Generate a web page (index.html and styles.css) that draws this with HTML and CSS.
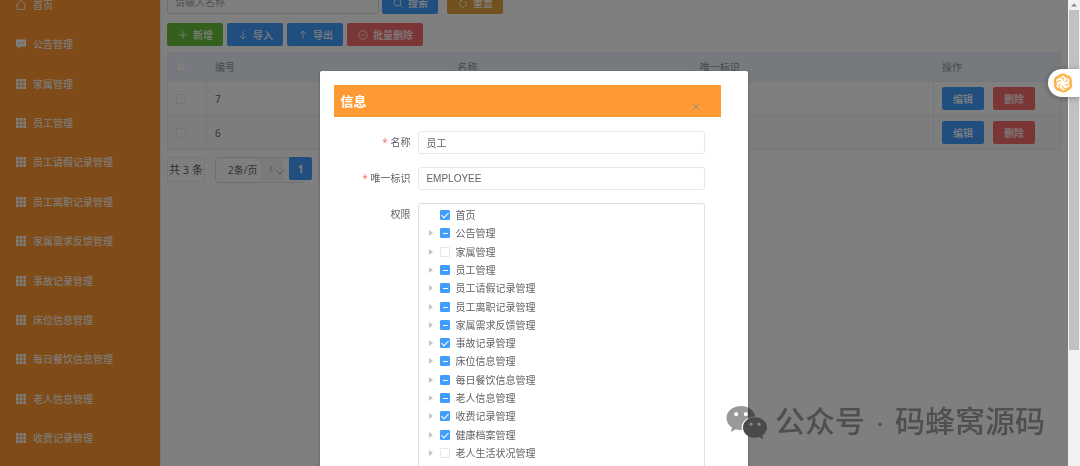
FILE: index.html
```html
<!DOCTYPE html>
<html lang="zh-CN">
<head>
<meta charset="utf-8">
<title>角色管理</title>
<link rel="stylesheet" href="styles.css">
</head>
<body>
<svg class="defs" aria-hidden="true">
  <symbol id="grid" viewBox="0 0 10 10"><path fill="currentColor" d="M0 0h2.7v2.7H0zM3.6 0h2.8v2.7H3.6zM7.3 0H10v2.7H7.3zM0 3.6h2.7v2.8H0zM3.6 3.6h2.8v2.8H3.6zM7.3 3.6H10v2.8H7.3zM0 7.3h2.7V10H0zM3.6 7.3h2.8V10H3.6zM7.3 7.3H10V10H7.3z"/></symbol>
</svg>
<div class="app">
  <nav class="sidebar">
    <div class="menu">
      <a class="item" href="#"><svg class="icon" viewBox="0 0 10 10"><path d="M.3 5 5 .5 9.700 5M1.300 4v5.500h2.200M8.700 4v5.500H3.500" fill="none" stroke="currentColor" stroke-width=".8"/></svg>首页</a>
      <a class="item" href="#"><svg class="icon" viewBox="0 0 10 10"><path fill="currentColor" fill-rule="evenodd" d="M0 .6h10v7H4.500L2 9.800V7.600H0zM2 3.500v1.200h1.200V3.500zM4.400 3.500v1.200h1.200V3.500zM6.800 3.500v1.200H8V3.500z"/></svg>公告管理</a>
      <a class="item" href="#"><svg class="icon"><use href="#grid"/></svg>家属管理</a>
      <a class="item" href="#"><svg class="icon"><use href="#grid"/></svg>员工管理</a>
      <a class="item" href="#"><svg class="icon"><use href="#grid"/></svg>员工请假记录管理</a>
      <a class="item" href="#"><svg class="icon"><use href="#grid"/></svg>员工离职记录管理</a>
      <a class="item" href="#"><svg class="icon"><use href="#grid"/></svg>家属需求反馈管理</a>
      <a class="item" href="#"><svg class="icon"><use href="#grid"/></svg>事故记录管理</a>
      <a class="item" href="#"><svg class="icon"><use href="#grid"/></svg>床位信息管理</a>
      <a class="item" href="#"><svg class="icon"><use href="#grid"/></svg>每日餐饮信息管理</a>
      <a class="item" href="#"><svg class="icon"><use href="#grid"/></svg>老人信息管理</a>
      <a class="item" href="#"><svg class="icon"><use href="#grid"/></svg>收费记录管理</a>
    </div>
  </nav>

  <main class="main">
    <form class="search">
      <input class="field" type="text" placeholder="请输入名称" aria-label="名称">
      <button class="btn blue" type="button"><svg class="icon" viewBox="0 0 10 10"><path d="M8 4.500a3.500 3.500 0 1 1-7 0 3.500 3.500 0 0 1 7 0M7 7l2.300 2.300" fill="none" stroke="currentColor" stroke-width=".8"/></svg>搜索</button>
      <button class="btn amber" type="button"><svg class="icon" viewBox="0 0 10 10"><path d="M2.600 3.200a3.400 3.400 0 1 0 4.800 0M4.600 3H2.500V.9" fill="none" stroke="currentColor" stroke-width=".8"/></svg>重置</button>
    </form>
    <div class="tools">
      <button class="btn green" type="button"><svg class="icon" viewBox="0 0 10 10"><path d="M5 1v8M1 5h8" fill="none" stroke="currentColor" stroke-width=".8"/></svg>新增</button>
      <button class="btn blue" type="button"><svg class="icon" viewBox="0 0 10 10"><path d="M5 1v8M2 6l3 3 3-3" fill="none" stroke="currentColor" stroke-width=".8"/></svg>导入</button>
      <button class="btn blue" type="button"><svg class="icon" viewBox="0 0 10 10"><path d="M5 9V1M2 4l3-3 3 3" fill="none" stroke="currentColor" stroke-width=".8"/></svg>导出</button>
      <button class="btn red" type="button"><svg class="icon" viewBox="0 0 10 10"><path d="M9.200 5A4.200 4.200 0 1 1 .8 5a4.200 4.200 0 0 1 8.400 0M3 5h4" fill="none" stroke="currentColor" stroke-width=".8"/></svg>批量删除</button>
    </div>
    <table class="table">
      <colgroup><col class="c-check"><col class="c-id"><col class="c-name"><col class="c-key"><col class="c-ops"></colgroup>
      <thead>
        <tr><th><input class="check" type="checkbox" aria-label="全选"></th><th>编号</th><th>名称</th><th>唯一标识</th><th>操作</th></tr>
      </thead>
      <tbody>
        <tr><td><input class="check" type="checkbox" aria-label="选择 7"></td><td>7</td><td></td><td></td><td><div class="ops"><button class="btn small blue" type="button">编辑</button><button class="btn small red" type="button">删除</button></div></td></tr>
        <tr><td><input class="check" type="checkbox" aria-label="选择 6"></td><td>6</td><td></td><td></td><td><div class="ops"><button class="btn small blue" type="button">编辑</button><button class="btn small red" type="button">删除</button></div></td></tr>
      </tbody>
    </table>
    <div class="pager">
      <span class="total">共 3 条</span>
      <div class="size">
        <select class="size-select" aria-label="每页条数"><option>2条/页</option></select>
        <button class="prev" type="button" aria-label="上一页"><svg class="icon" viewBox="0 0 10 10"><path d="M5.500 2 3 5l2.500 3" fill="none" stroke="currentColor" stroke-width=".8"/></svg></button>
        <svg class="icon caret" viewBox="0 0 10 10"><path d="M1.500 3.500 5 7l3.500-3.500" fill="none" stroke="currentColor" stroke-width=".8"/></svg>
      </div>
      <button class="page on" type="button">1</button>
      <button class="page" type="button">2</button>
    </div>
  </main>

  <div class="scrollbar"><svg class="arrow" viewBox="0 0 10 10"><path d="M2 6.500l3-3 3 3z" fill="#808080"/></svg><div class="thumb"></div></div>
</div>

<div class="overlay">
  <section class="dialog" role="dialog" aria-label="信息">
    <header class="dialog-head">
      <h2 class="title">信息</h2>
      <button class="close" type="button" aria-label="关闭"><svg class="icon" viewBox="0 0 10 10"><path d="M1.500 1.500l7 7M8.500 1.500l-7 7" fill="none" stroke="currentColor"/></svg></button>
    </header>
    <form class="form">
      <label class="label required" for="name">名称</label>
      <input class="field" id="name" type="text" value="员工">
      <label class="label required" for="key">唯一标识</label>
      <input class="field" id="key" type="text" value="EMPLOYEE">
      <span class="label">权限</span>
      <div class="tree-box">
        <ul class="tree">
          <li class="node leaf"><label class="pick"><input class="check" type="checkbox" checked>首页</label></li>
          <li class="node"><label class="pick"><input class="check partial" type="checkbox">公告管理</label></li>
          <li class="node"><label class="pick"><input class="check" type="checkbox">家属管理</label></li>
          <li class="node"><label class="pick"><input class="check partial" type="checkbox">员工管理</label></li>
          <li class="node"><label class="pick"><input class="check partial" type="checkbox">员工请假记录管理</label></li>
          <li class="node"><label class="pick"><input class="check partial" type="checkbox">员工离职记录管理</label></li>
          <li class="node"><label class="pick"><input class="check partial" type="checkbox">家属需求反馈管理</label></li>
          <li class="node"><label class="pick"><input class="check" type="checkbox" checked>事故记录管理</label></li>
          <li class="node"><label class="pick"><input class="check partial" type="checkbox">床位信息管理</label></li>
          <li class="node"><label class="pick"><input class="check partial" type="checkbox">每日餐饮信息管理</label></li>
          <li class="node"><label class="pick"><input class="check partial" type="checkbox">老人信息管理</label></li>
          <li class="node"><label class="pick"><input class="check" type="checkbox" checked>收费记录管理</label></li>
          <li class="node"><label class="pick"><input class="check" type="checkbox" checked>健康档案管理</label></li>
          <li class="node"><label class="pick"><input class="check" type="checkbox">老人生活状况管理</label></li>
        </ul>
      </div>
    </form>
  </section>
</div>

<button class="assistant" type="button" aria-label="助手">
  <svg class="flower" viewBox="-10 -10 20 20">
    <g fill="none" stroke="#fbb040" stroke-width="2.200" stroke-linecap="round">
      <path id="petal" d="M-4.500-5.500C-3.500-9 1.500-9.500 3.500-6.500"/>
      <use href="#petal" transform="rotate(60)"/><use href="#petal" transform="rotate(120)"/><use href="#petal" transform="rotate(180)"/><use href="#petal" transform="rotate(240)"/><use href="#petal" transform="rotate(300)"/>
    </g>
    <g fill="none" stroke="#fcc56f" stroke-width="1.300" stroke-linecap="round">
      <path id="swirl" d="M-4-5.500C-1.500-6.500 0-5 .5-3"/>
      <use href="#swirl" transform="rotate(60)"/><use href="#swirl" transform="rotate(120)"/><use href="#swirl" transform="rotate(180)"/><use href="#swirl" transform="rotate(240)"/><use href="#swirl" transform="rotate(300)"/>
    </g>
  </svg>
</button>

<div class="watermark">
  <svg class="wechat" viewBox="0 0 42 34">
    <path fill="#000" fill-opacity=".4" fill-rule="evenodd" d="M15 1C6.800 1 .5 6.300.5 13c0 4 2.200 7.300 5.500 9.500L4.800 27l5-2.700c2 .6 4 .9 6.200.7-1.800-7 4-13.700 13.300-13.600C28 5.500 22.300 1 15 1zM10.200 7.200a1.900 1.900 0 1 1 0 3.800 1.900 1.900 0 0 1 0-3.800zm9.600 0a1.900 1.900 0 1 1 0 3.800 1.900 1.900 0 0 1 0-3.800z"/>
    <path fill="#fff" d="M10.200 7.200a1.900 1.900 0 1 1 0 3.800 1.900 1.900 0 0 1 0-3.800zm9.600 0a1.900 1.900 0 1 1 0 3.800 1.900 1.900 0 0 1 0-3.800z"/>
    <path fill="#4a4a4a" d="M29 12.300c-7 0-12 4.600-12 10.200s5 10.200 12 10.200c1.500 0 2.900-.2 4.200-.6l4 2-.9-3.600c2.900-1.900 4.700-4.700 4.700-8 0-5.600-5-10.200-12-10.200z"/>
    <circle cx="25" cy="19.200" r="1.600" fill="#888"/><circle cx="33" cy="19.200" r="1.600" fill="#888"/>
  </svg>
  <span>公众号</span><span class="dot">·</span><span>码蜂窝源码</span>
</div>
</body>
</html>
```
FILE: styles.css
```css
* { box-sizing: border-box; }

body {
  margin: 0;
  height: 100vh;
  overflow: hidden;
  background: #fff;
  color: #606266;
  font: 10px/16px "Open Sans", "Noto Sans CJK SC", sans-serif;
}

button, input, select { font: inherit; color: inherit; margin: 0; }
button { border: 0; padding: 0; }

.defs { display: none; }
.icon { width: 10px; height: 10px; flex: none; }

.app { display: flex; height: 100vh; overflow: hidden; }

/* Sidebar */
.sidebar { flex: none; width: 160px; background: #ff9933; }
.menu {
  display: grid;
  grid-auto-rows: 1fr;
  height: 473px;
  margin-top: -15px;
}
.item {
  display: flex;
  align-items: center;
  gap: 7px;
  padding-left: 16px;
  color: #fff;
  text-decoration: none;
}

/* Content */
.main {
  flex: 1;
  min-width: 0;
  margin-top: -9px;
  padding: 0 7px 0 6px;
  border-left: 1px solid #eee;
}
.search { display: flex; gap: 9px; }
.search .field { width: 212px; margin-right: -6px; }
.tools { display: flex; gap: 4px; margin: 9px 0 6px; }

.field {
  width: 100%;
  height: 23px;
  padding: 0 7px;
  border: 1px solid #dcdfe6;
  border-radius: 3px;
  background: #fff;
  font-family: "Liberation Sans", "Noto Sans CJK SC", sans-serif;
}
.field::placeholder { color: #a0a4ac; opacity: 1; }

.btn {
  display: flex;
  align-items: center;
  justify-content: center;
  gap: 5px;
  height: 23px;
  padding: 0 10px 0 11px;
  border-radius: 2px;
  color: #fff;
  font-weight: 500;
}
.small { padding: 0 11px; }
.blue { background: #409eff; }
.green { background: #67c23a; }
.amber { background: #e6a23c; }
.red { background: #f56c6c; }

.table {
  width: 100%;
  table-layout: fixed;
  border-collapse: collapse;
  border: 1px solid #ebeef5;
}
.c-check { width: 39px; }
.c-ops { width: 127px; }
.table th, .table td {
  padding: 0 8px;
  border: 1px solid #ebeef5;
  text-align: left;
  font-weight: 400;
}
.table th { height: 29px; background: #ecf5fc; color: #909399; }
.table td { height: 34px; }
.table tbody tr:nth-child(2) { background: #fafafa; }
.table .check { border-color: #e8eaef; }
.ops { display: flex; gap: 9px; }

.check {
  appearance: none;
  display: block;
  position: relative;
  flex: none;
  width: 10px;
  height: 10px;
  border: 1px solid #dcdfe6;
  border-radius: 1px;
  background: #fff;
}
.check:checked, .check.partial { border-color: #409eff; background: #409eff; }
.check:checked::after {
  content: "";
  position: absolute;
  left: 2px;
  top: 0;
  width: 3px;
  height: 6px;
  border: solid #fff;
  border-width: 0 1px 1px 0;
  transform: rotate(45deg);
}
.check.partial::after {
  content: "";
  position: absolute;
  left: 2px;
  top: 4px;
  width: 5px;
  height: 1px;
  background: #fff;
}

.pager { display: flex; align-items: flex-start; gap: 6px; margin-top: 7px; }
.total {
  height: 25px;
  margin-right: 4px;
  border: 1px solid #ebeef5;
  padding: 0 1px;
  font-size: 11px;
  line-height: 23px;
}
.size { position: relative; width: 68px; }
.size-select {
  appearance: none;
  width: 90px;
  height: 26px;
  padding: 0 12px;
  border: 1px solid #dcdfe6;
  border-radius: 3px;
  background: #fff;
}
.prev {
  position: absolute;
  right: 0;
  top: 1px;
  width: 23px;
  height: 23px;
  background: #f4f4f5;
  color: #909399;
}
.caret { position: absolute; right: -2px; top: 10px; color: #909399; }
.page {
  position: relative;
  width: 23px;
  height: 23px;
  border-radius: 2px;
  background: #f4f4f5;
  font-weight: 700;
}
.page.on { background: #409eff; color: #fff; }

.scrollbar { flex: none; width: 12px; padding: 0 1px; background: #f1f1f1; }
.arrow { display: block; width: 10px; height: 10px; }
.thumb { height: 73vh; background: #c1c1c1; }

/* Dialog */
.overlay {
  position: fixed;
  inset: 0 12px 0 0;
  overflow: hidden;
  padding-top: 71px;
  background: rgba(0, 0, 0, .5);
}
.dialog {
  width: 40%;
  min-height: 100%;
  margin: 0 auto;
  padding: 14px;
  border-radius: 2px;
  background: #fff;
  box-shadow: 0 1px 3px rgba(0, 0, 0, .3);
}
.dialog-head {
  display: flex;
  align-items: center;
  justify-content: space-between;
  height: 32px;
  margin-right: 13px;
  padding: 0 20px 0 6px;
  background: #ff9933;
}
.title { margin: 0; color: #fff; font-size: 13px; line-height: 20px; }
.close {
  align-self: flex-end;
  width: 10px;
  height: 16px;
  background: none;
  color: #909399;
}
.close .icon { display: block; margin-bottom: 4px; }
.form {
  display: grid;
  grid-template-columns: 76px 1fr;
  gap: 13px 8px;
  padding: 14px 29px 0 0;
}
.label { line-height: 23px; text-align: right; }
.required::before { content: "* "; color: #f56c6c; }
.form .field { border-color: #e4e7ed; }

.tree-box {
  padding: 2px 11px 24px 10px;
  border: 1px solid #dcdfe6;
  border-radius: 3px;
}
.tree {
  display: grid;
  grid-auto-rows: 1fr;
  height: 256px;
  margin: 0;
  padding: 0;
  list-style: none;
}
.node { display: flex; align-items: center; gap: 7px; }
.node::before {
  content: "";
  border: solid transparent;
  border-width: 3px 0 3px 4px;
  border-left-color: #c0c4cc;
}
.node .check:not(:checked, .partial) { border-color: #e4e7ed; }
.leaf::before { border-left-color: transparent; }
.pick { display: flex; align-items: center; gap: 5px; }

/* Floating items */
.assistant {
  position: fixed;
  right: 0;
  top: 69px;
  display: flex;
  align-items: center;
  width: 32px;
  height: 28px;
  padding-left: 5px;
  border-radius: 14px 0 0 14px;
  background: #fff;
  box-shadow: 0 1px 6px rgba(0, 0, 0, .3);
}
.flower { width: 20px; height: 20px; }

.watermark {
  position: fixed;
  right: 35px;
  bottom: 24px;
  display: flex;
  align-items: center;
  color: #4f4f4f;
  font: 500 30px/40px "Liberation Sans", "Noto Sans CJK SC", sans-serif;
}
.wechat { width: 42px; height: 34px; margin-right: 7px; }
.dot { width: 30px; text-align: center; }
```
